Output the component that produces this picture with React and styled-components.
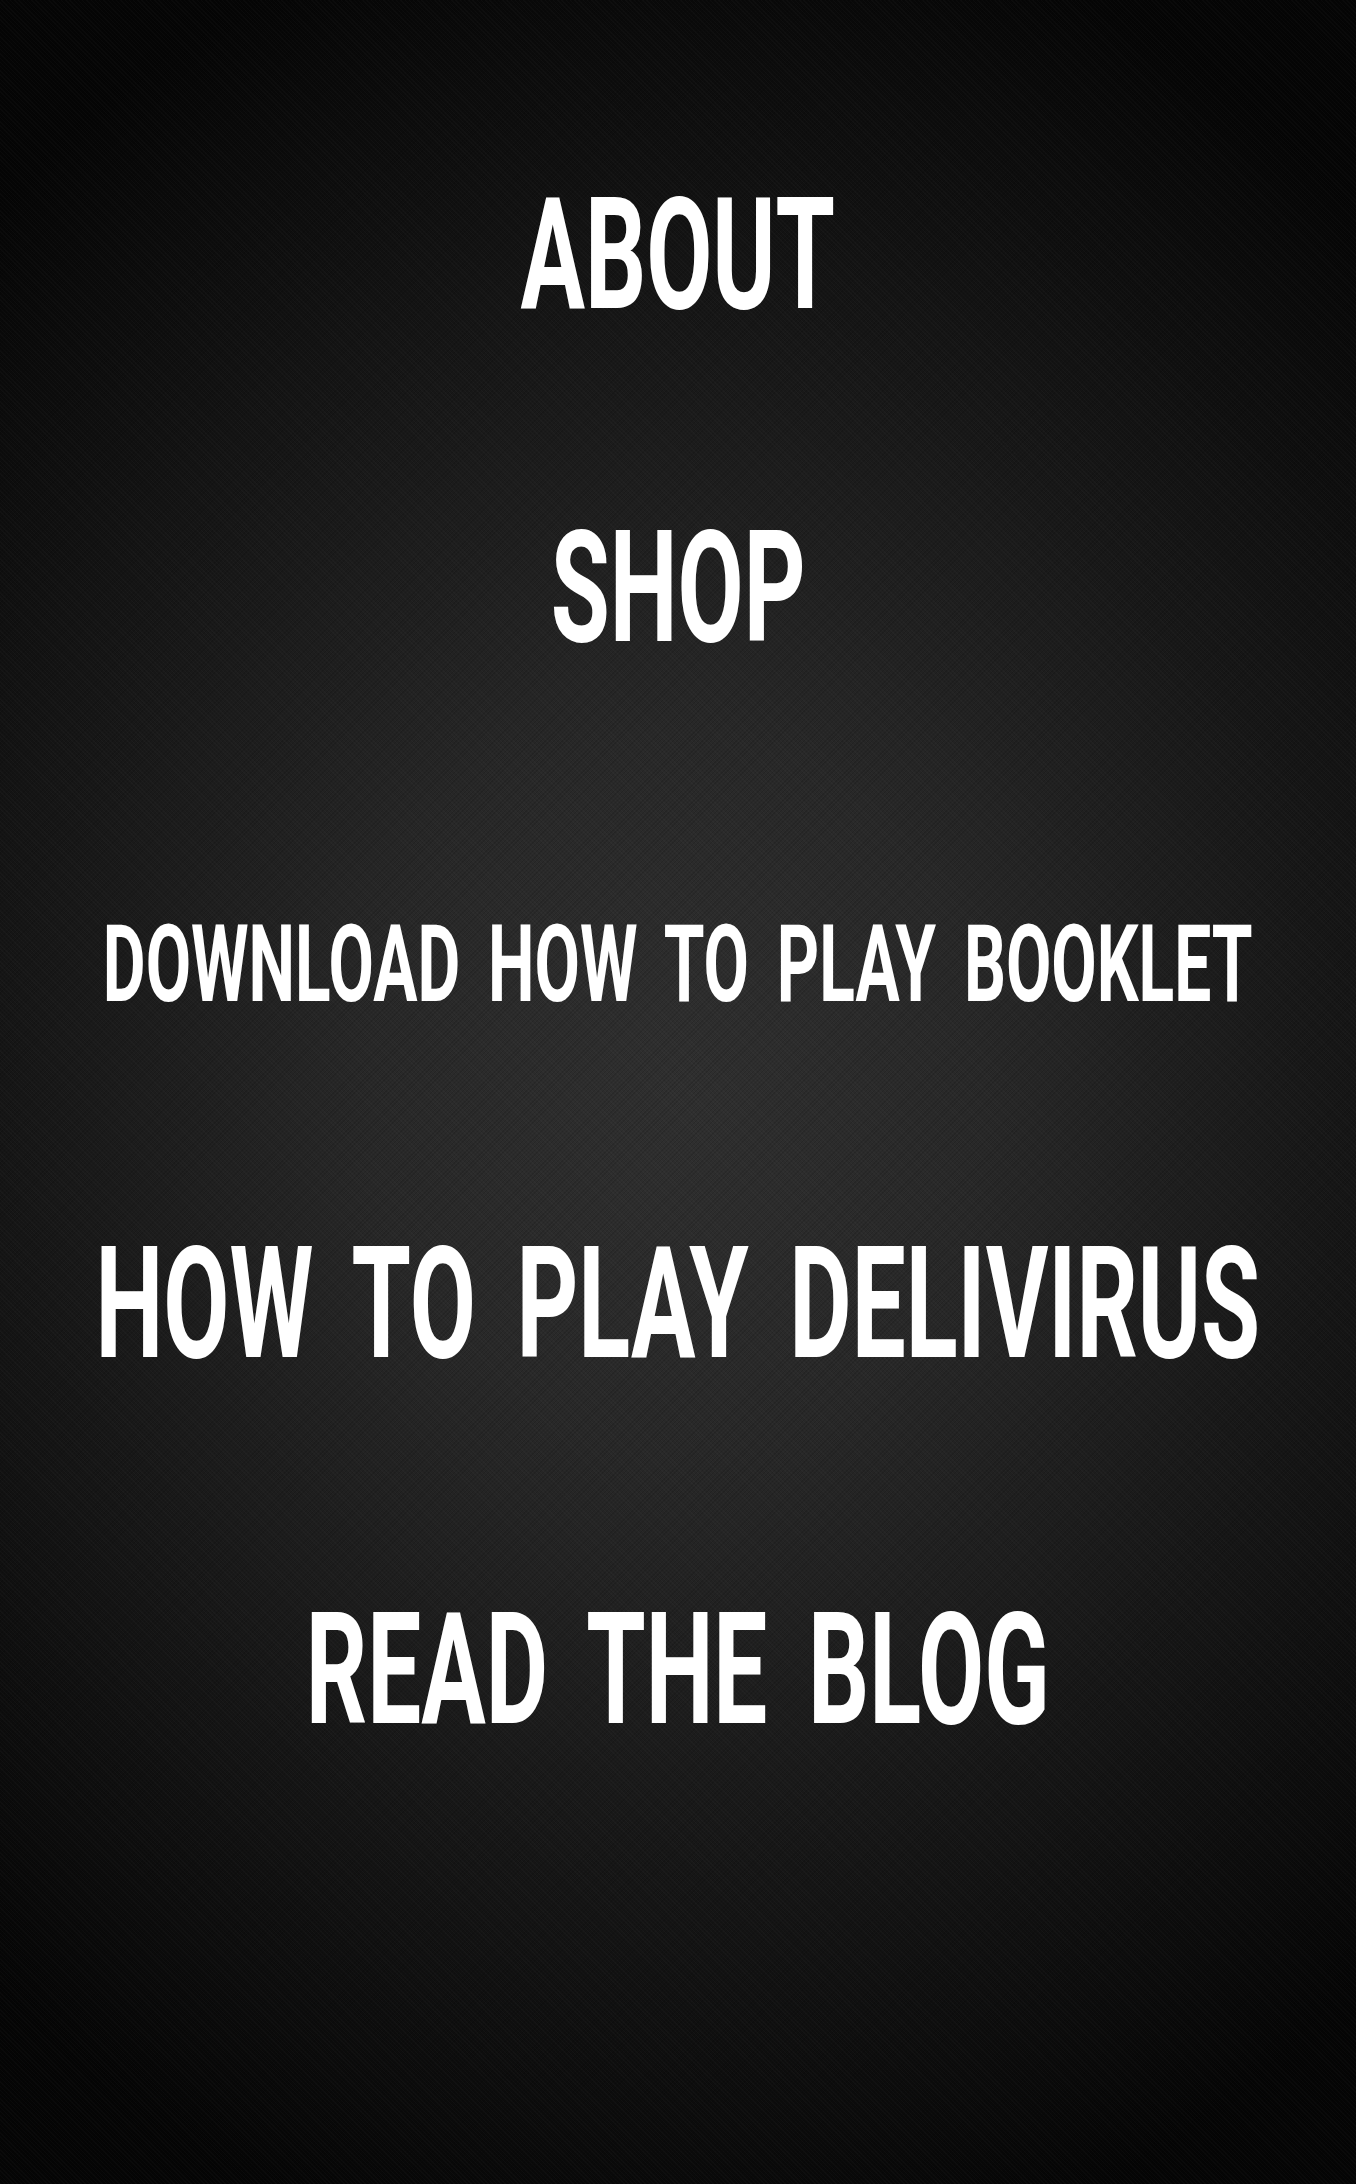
import styled, { createGlobalStyle } from "styled-components";

const GlobalStyle = createGlobalStyle`
  html, body {
    margin: 0;
    padding: 0;
    background: #000;
  }
  * {
    box-sizing: border-box;
  }
`;

const links = [
  { label: "ABOUT", size: "lg", gap: 177 },
  { label: "SHOP", size: "lg", gap: 177 },
  { label: "DOWNLOAD HOW TO PLAY BOOKLET", size: "sm", gap: 245 },
  { label: "HOW TO PLAY DELIVIRUS", size: "lg", gap: 208 },
  { label: "READ THE BLOG", size: "lg", gap: 210 },
];

export default function App() {
  return (
    <>
      <GlobalStyle />
      <Page>
        <Menu>
          {links.map((link) => (
            <MenuItem key={link.label} $gap={link.gap}>
              <MenuLink href="#" $size={link.size}>
                {link.label}
              </MenuLink>
            </MenuItem>
          ))}
        </Menu>
      </Page>
    </>
  );
}

const Page = styled.div`
  width: 100%;
  min-height: 2184px;
  overflow: hidden;
  background-color: #000;
  background-image:
    repeating-linear-gradient(
      45deg,
      rgba(255, 255, 255, 0.018) 0px,
      rgba(255, 255, 255, 0.018) 1px,
      transparent 1px,
      transparent 3px
    ),
    repeating-linear-gradient(
      -45deg,
      rgba(0, 0, 0, 0.12) 0px,
      rgba(0, 0, 0, 0.12) 1px,
      transparent 1px,
      transparent 3px
    ),
    radial-gradient(
      ellipse 75% 55% at 50% 50%,
      #2f2f2f 0%,
      #282828 30%,
      #161616 65%,
      #050505 100%
    );
`;

const Menu = styled.ul`
  list-style: none;
  margin: 0;
  padding: 0;
  display: flex;
  flex-direction: column;
  align-items: center;
`;

const MenuItem = styled.li`
  margin-top: ${(p) => p.$gap}px;
  width: 100%;
  display: flex;
  justify-content: center;
`;

/* condensed look: Roboto squeezed horizontally, wider word gaps like DIN */
const MenuLink = styled.a`
  display: inline-block;
  font-family: Roboto, "Liberation Sans", sans-serif;
  font-weight: 700;
  font-size: ${(p) => (p.$size === "sm" ? "107px" : "156px")};
  line-height: 1;
  word-spacing: 0.175em;
  color: #fff;
  text-decoration: none;
  white-space: nowrap;
  transform: scaleX(0.615);
  transform-origin: center;
`;
